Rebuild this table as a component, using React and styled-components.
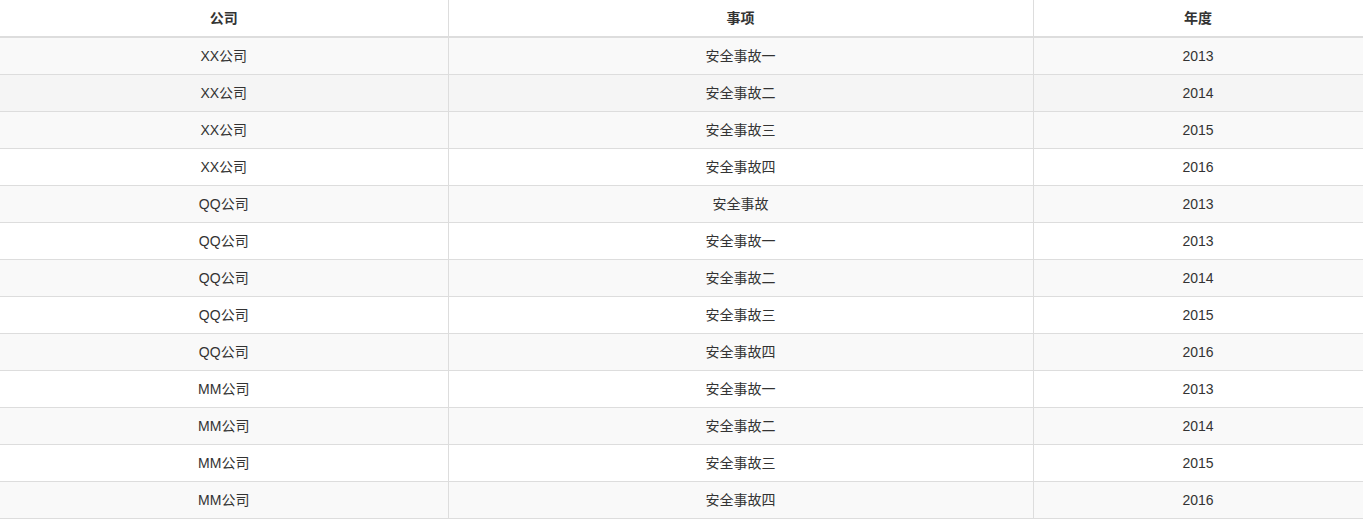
import React from "react";
import styled, { createGlobalStyle } from "styled-components";

const GlobalStyle = createGlobalStyle`
  body {
    margin: 0;
    background: #fff;
    font-family: "Liberation Sans", Arial, "Noto Sans CJK SC", sans-serif;
    font-size: 14px;
    color: #333;
  }
`;

const Table = styled.table`
  width: 1363px;
  border-collapse: collapse;
  border-spacing: 0;
  table-layout: fixed;
  border-bottom: 1px solid #ddd;
  border-right: 1px solid #ddd;
`;

const HeadCell = styled.th`
  height: 20px;
  padding: 8px;
  line-height: 20px;
  font-weight: bold;
  text-align: center;
  vertical-align: bottom;
  border-bottom: 2px solid #ddd;
  border-left: ${(p) => (p.$first ? "none" : "1px solid #ddd")};
`;

const Row = styled.tr`
  background: ${(p) => (p.$hover ? "#f5f5f5" : p.$odd ? "#f9f9f9" : "#fff")};
`;

const Cell = styled.td`
  padding: 8px;
  line-height: 20px;
  text-align: center;
  vertical-align: top;
  border-top: ${(p) => (p.$topless ? "none" : "1px solid #ddd")};
  border-left: ${(p) => (p.$first ? "none" : "1px solid #ddd")};
`;

const rows = [
  ["XX公司", "安全事故一", "2013"],
  ["XX公司", "安全事故二", "2014"],
  ["XX公司", "安全事故三", "2015"],
  ["XX公司", "安全事故四", "2016"],
  ["QQ公司", "安全事故", "2013"],
  ["QQ公司", "安全事故一", "2013"],
  ["QQ公司", "安全事故二", "2014"],
  ["QQ公司", "安全事故三", "2015"],
  ["QQ公司", "安全事故四", "2016"],
  ["MM公司", "安全事故一", "2013"],
  ["MM公司", "安全事故二", "2014"],
  ["MM公司", "安全事故三", "2015"],
  ["MM公司", "安全事故四", "2016"],
];

export default function App() {
  return (
    <>
      <GlobalStyle />
      <Table>
        <colgroup>
          <col style={{ width: 448 }} />
          <col style={{ width: 585 }} />
          <col style={{ width: 330 }} />
        </colgroup>
        <thead>
          <tr>
            <HeadCell $first>公司</HeadCell>
            <HeadCell>事项</HeadCell>
            <HeadCell>年度</HeadCell>
          </tr>
        </thead>
        <tbody>
          {rows.map((r, i) => (
            <Row key={i} $odd={i % 2 === 0} $hover={i === 1}>
              {r.map((c, j) => (
                <Cell key={j} $first={j === 0} $topless={i === 0}>
                  {c}
                </Cell>
              ))}
            </Row>
          ))}
        </tbody>
      </Table>
    </>
  );
}
